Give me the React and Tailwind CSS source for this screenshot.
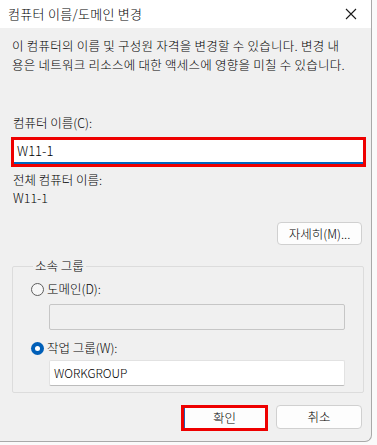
import React from 'react';

const font = { fontFamily: '"Noto Sans CJK KR", "Noto Sans", sans-serif' };

function Radio({ checked, label }) {
  return (
    <div className="flex items-center h-[18px]">
      {checked ? (
        <span className="w-[13px] h-[13px] rounded-full bg-[#005fb8] flex items-center justify-center">
          <span className="w-[5px] h-[5px] rounded-full bg-white" />
        </span>
      ) : (
        <span className="w-[13px] h-[13px] rounded-full border border-[#5d5d5d] bg-[#f7f7f7]" />
      )}
      <span className="ml-[3px]">{label}</span>
    </div>
  );
}

export default function App() {
  return (
    <div className="w-[377px] h-[445px] bg-[#fafafa] text-[12.5px] font-light text-black leading-[18px]" style={font}>
      <div className="w-[372px] h-[442px] bg-[#f0f0f0] border-r border-b border-[#a9a9a9] rounded-br-[7px] overflow-hidden flex flex-col">
        {/* title bar */}
        <div className="h-[28px] bg-white flex items-center justify-between pl-[8px] pr-[10px] shrink-0">
          <span className="text-[13px] tracking-[0.3px]">컴퓨터 이름/도메인 변경</span>
          <svg width="12" height="12" viewBox="0 0 12 12" className="mr-[4px]">
            <path d="M1 1L11 11M11 1L1 11" stroke="#1a1a1a" strokeWidth="1.1" />
          </svg>
        </div>

        <div className="flex flex-col px-[11px]">
          <p className="mt-[8px] ml-[1px] leading-[19px] tracking-[0.25px]">
            이 컴퓨터의 이름 및 구성원 자격을 변경할 수 있습니다. 변경 내<br />
            용은 네트워크 리소스에 대한 액세스에 영향을 미칠 수 있습니다.
          </p>

          <div className="mt-[40px] ml-[2px]">컴퓨터 이름(C):</div>
          <div className="mt-[5px] w-[355px] h-[30px] border-[3px] border-[#ee0000] bg-white">
            <div className="h-full border-b-2 border-[#0067c0] flex items-center pl-[3px] text-[13px]">W11-1</div>
          </div>

          <div className="mt-[4px] ml-[2px]">전체 컴퓨터 이름:</div>
          <div className="ml-[2px]">W11-1</div>

          <div className="flex justify-end mt-[15px] w-[351px]">
            <button className="w-[85px] h-[23px] rounded-[4px] border border-[#d0d0d0] bg-[#fdfdfd]">자세히(M)...</button>
          </div>

          <fieldset className="mt-[12px] ml-[1px] w-[350px] h-[136px] border border-[#dcdcdc] rounded-[2px] px-[18px] pb-0">
            <legend className="ml-[2px] px-[2px]">소속 그룹</legend>
            <div className="mt-[5px]">
              <Radio label="도메인(D):" />
            </div>
            <div className="mt-[6px] ml-[18px] w-[296px] h-[26px] border border-[#c6c6c6] rounded-[2px] bg-[#f0f0f0]" />
            <div className="mt-[9px]">
              <Radio checked label="작업 그룹(W):" />
            </div>
            <div className="mt-[3px] ml-[18px] w-[296px] h-[26px] border border-[#e2e2e2] border-b-[#bcbcbc] rounded-[2px] bg-white flex items-center pl-[4px] text-[12px]">
              WORKGROUP
            </div>
          </fieldset>

          <div className="flex justify-end gap-[8px] mt-[12px] w-[351px]">
            <button className="w-[87px] h-[26px] border-[3px] border-[#ee0000] bg-[#fdfdfd] shadow-[inset_1px_0_0_#1f5fb0]">확인</button>
            <button className="w-[86px] h-[24px] rounded-[4px] border border-[#d0d0d0] bg-[#fdfdfd]">취소</button>
          </div>
        </div>
      </div>
    </div>
  );
}
